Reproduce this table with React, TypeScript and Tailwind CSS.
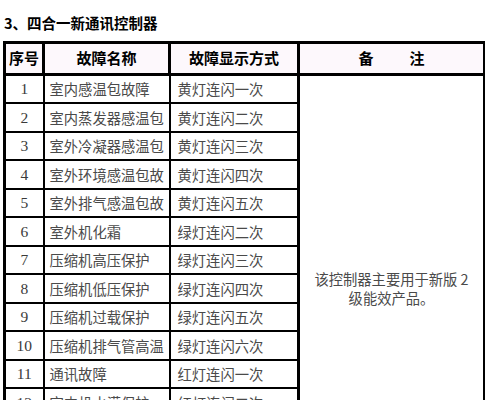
import React from "react";

const rows: [string, string, string][] = [
  ["1", "室内感温包故障", "黄灯连闪一次"],
  ["2", "室内蒸发器感温包", "黄灯连闪二次"],
  ["3", "室外冷凝器感温包", "黄灯连闪三次"],
  ["4", "室外环境感温包故", "黄灯连闪四次"],
  ["5", "室外排气感温包故", "黄灯连闪五次"],
  ["6", "室外机化霜", "绿灯连闪二次"],
  ["7", "压缩机高压保护", "绿灯连闪三次"],
  ["8", "压缩机低压保护", "绿灯连闪四次"],
  ["9", "压缩机过载保护", "绿灯连闪五次"],
  ["10", "压缩机排气管高温", "绿灯连闪六次"],
  ["11", "通讯故障", "红灯连闪一次"],
  ["12", "室内机水满保护", "红灯连闪二次"],
  ["13", "电流保护", "红灯连闪三次"],
  ["14", "电压保护", "红灯连闪四次"],
  ["15", "模块保护", "红灯连闪五次"],
];

const cjk = { fontFamily: '"Noto Sans CJK SC", sans-serif' };
const serif = { fontFamily: '"Liberation Serif", "Noto Sans CJK SC", serif' };

export default function App() {
  return (
    <div className="w-[485px] h-[400px] overflow-hidden bg-white">
      <div
        className="pt-[13px] pl-[4px] h-[41px] text-[14.5px] font-bold text-black leading-[20px]"
        style={cjk}
      >
        3、四合一新通讯控制器
      </div>
      <table className="ml-[3px] border-collapse border-[3px] border-black table-fixed w-[480px]">
        <colgroup>
          <col className="w-[39px]" />
          <col className="w-[126px]" />
          <col className="w-[129px]" />
          <col className="w-[186px]" />
        </colgroup>
        <thead>
          <tr className="h-[32px] bg-[#fdf8fc]">
            <th className="border-[3px] border-black text-[15px] font-bold text-black p-0 text-center" style={cjk}>
              序号
            </th>
            <th className="border-[3px] border-black text-[15px] font-bold text-black p-0 text-center" style={cjk}>
              故障名称
            </th>
            <th className="border-[3px] border-black text-[15px] font-bold text-black p-0 text-center" style={cjk}>
              故障显示方式
            </th>
            <th className="border-[3px] border-black text-[15px] font-bold text-black p-0 text-center" style={cjk}>
              <span className="inline-flex gap-[36px]">
                <span>备</span>
                <span>注</span>
              </span>
            </th>
          </tr>
        </thead>
        <tbody>
          {rows.map((r, i) => (
            <tr key={r[0]} className="h-[28.5px]">
              <td className="border-2 border-black text-center text-[15.5px] text-[#3a3a3a] p-0" style={serif}>
                {r[0]}
              </td>
              <td className="border-2 border-black text-left pl-[5px] text-[14.3px] text-[#4a4a4a] p-0 whitespace-nowrap overflow-hidden" style={cjk}>
                {r[1]}
              </td>
              <td className="border-2 border-black text-left pl-[7px] text-[14.3px] text-[#4a4a4a] p-0 whitespace-nowrap overflow-hidden" style={cjk}>
                {r[2]}
              </td>
              {i === 0 && (
                <td
                  rowSpan={rows.length}
                  className="border-[3px] border-black text-center align-middle text-[14.3px] text-[#4a4a4a] p-0 leading-[19px] bg-white"
                  style={cjk}
                >
                  该控制器主要用于新版 2
                  <br />
                  级能效产品。
                </td>
              )}
            </tr>
          ))}
        </tbody>
      </table>
    </div>
  );
}
